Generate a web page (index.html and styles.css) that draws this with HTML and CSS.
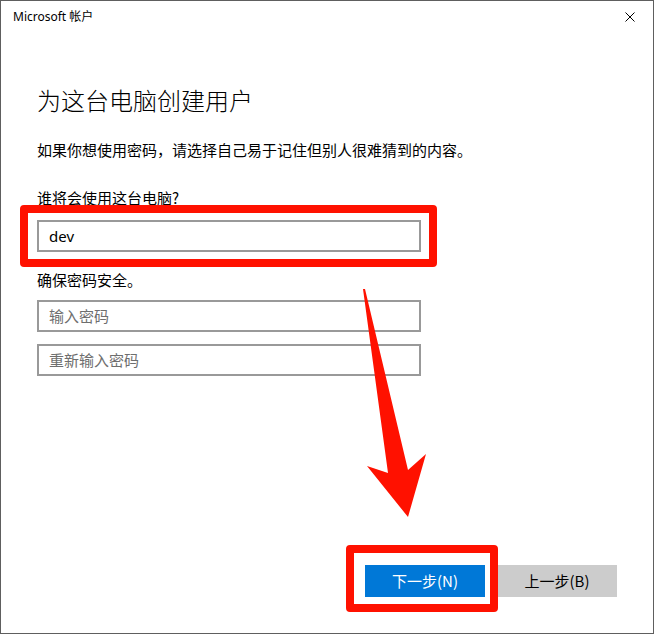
FILE: index.html
```html
<!DOCTYPE html>
<html lang="zh-CN">
<head>
<meta charset="utf-8">
<title>Microsoft 帐户</title>
<link rel="stylesheet" href="styles.css">
</head>
<body>
<div class="window">
  <div class="titlebar">
    <span class="title">Microsoft 帐户</span>
    <svg class="close" width="10" height="10" viewBox="0 0 10 10" aria-label="关闭">
      <path d="M0.5 0.5 L9.5 9.5 M9.5 0.5 L0.5 9.5" stroke="#000" stroke-width="1" fill="none"/>
    </svg>
  </div>
  <div class="content">
    <h1 class="heading">为这台电脑创建用户</h1>
    <p class="intro">如果你想使用密码，请选择自己易于记住但别人很难猜到的内容。</p>
    <div class="label label-who">谁将会使用这台电脑?</div>
    <input class="field field-user" type="text" value="dev">
    <div class="label label-pw">确保密码安全。</div>
    <input class="field field-pw" type="password" placeholder="输入密码">
    <input class="field field-pw2" type="password" placeholder="重新输入密码">
  </div>
  <div class="footer">
    <button class="btn btn-primary">下一步(N)</button>
    <button class="btn btn-secondary">上一步(B)</button>
  </div>
  <div class="mark mark-field"></div>
  <div class="mark mark-button"></div>
  <svg class="arrow" width="654" height="634" viewBox="0 0 654 634">
    <polygon points="363,289 388,473 367,466 408,517 426,454 408,470 365,289" fill="#ff1100"/>
  </svg>
</div>
</body>
</html>
```

FILE: styles.css
```css
html, body {
  margin: 0;
  padding: 0;
  background: #ffffff;
}

.window {
  position: relative;
  box-sizing: border-box;
  width: 654px;
  height: 634px;
  border: 1px solid #5e5e5e;
  background: #ffffff;
  display: flex;
  flex-direction: column;
  font-family: "Noto Sans", "Noto Sans CJK SC", sans-serif;
  color: #000;
  overflow: hidden;
}

.titlebar {
  height: 30px;
  display: flex;
  align-items: center;
  justify-content: space-between;
  padding: 0 18px 0 12px;
  flex: none;
}

.title {
  font-size: 12px;
  line-height: 14px;
  margin-top: 2px;
}

.close {
  display: block;
  margin-top: 2px;
}

.content {
  display: flex;
  flex-direction: column;
  align-items: flex-start;
  padding: 0 36px;
}

.heading {
  margin: 57px 0 0 0;
  font-family: "Noto Sans CJK SC", sans-serif;
  font-weight: 300;
  font-size: 24px;
  line-height: 24px;
}

.intro {
  margin: 30px 0 0 0;
  font-family: "Noto Sans CJK SC", sans-serif;
  font-size: 15px;
  line-height: 15px;
}

.label {
  font-family: "Noto Sans CJK SC", sans-serif;
  font-size: 15px;
  line-height: 15px;
}

.label-who {
  margin-top: 33px;
}

.label-pw {
  margin-top: 20px;
}

.field {
  box-sizing: border-box;
  width: 384px;
  height: 32px;
  margin: 0;
  border: 2px solid #999999;
  padding: 0 10px;
  font-family: "Noto Sans", "Noto Sans CJK SC", sans-serif;
  font-size: 15px;
  color: #000;
  background: #fff;
  outline: none;
}

.field::placeholder {
  color: #6e6e6e;
  font-family: "Noto Sans CJK SC", sans-serif;
}

.field-user {
  margin-top: 15px;
}

.field-pw {
  margin-top: 13px;
}

.field-pw2 {
  margin-top: 12px;
}

.footer {
  margin-top: auto;
  display: flex;
  justify-content: flex-end;
  gap: 12px;
  padding: 0 36px 36px 0;
}

.btn {
  width: 120px;
  height: 32px;
  border: none;
  margin: 0;
  padding: 0;
  font-family: "Noto Sans CJK SC", sans-serif;
  font-size: 15px;
  line-height: 32px;
}

.btn-primary {
  background: #0078d7;
  color: #ffffff;
}

.btn-secondary {
  background: #cccccc;
  color: #000000;
}

.mark {
  position: absolute;
  box-sizing: border-box;
  border: 8px solid #ff1100;
  border-radius: 4px;
  pointer-events: none;
}

.mark-field {
  left: 19px;
  top: 204px;
  width: 417px;
  height: 62px;
}

.mark-button {
  left: 345px;
  top: 544px;
  width: 152px;
  height: 67px;
}

.arrow {
  position: absolute;
  left: -1px;
  top: -1px;
  pointer-events: none;
}
```
